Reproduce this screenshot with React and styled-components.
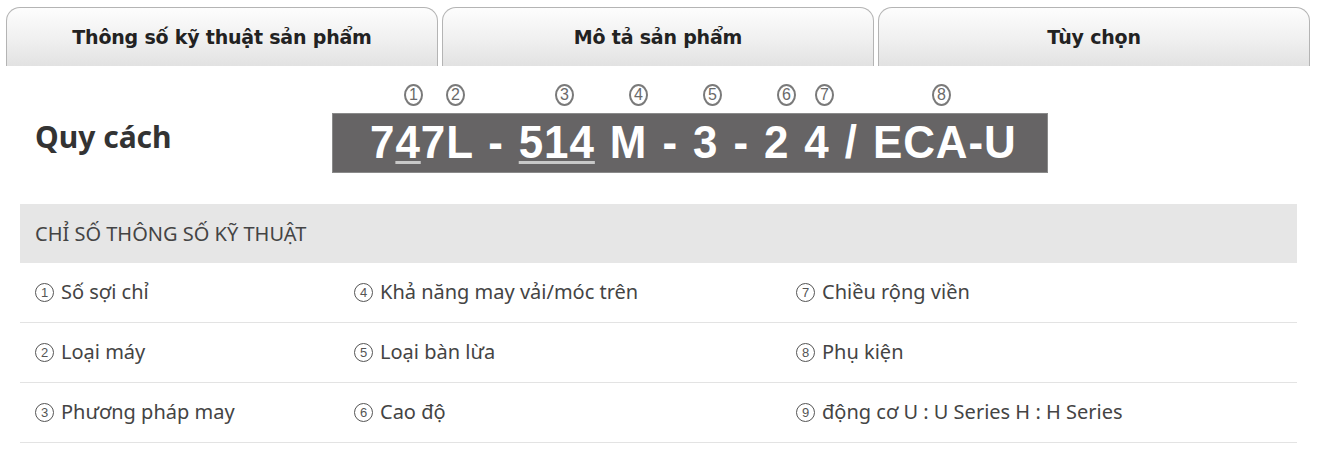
import React from 'react';
import styled, { createGlobalStyle } from 'styled-components';

const GlobalStyle = createGlobalStyle`
  body {
    margin: 0;
    background: #fff;
    font-family: 'Noto Sans', 'Open Sans', sans-serif;
    color: #333;
  }
`;

const Page = styled.div`
  width: 1320px;
  height: 475px;
  overflow: hidden;
`;

const TabBar = styled.div`
  display: grid;
  grid-template-columns: repeat(3, 432px);
  gap: 4px;
  padding: 7px 0 0 6px;
`;

const Tab = styled.div`
  height: 59px;
  box-sizing: border-box;
  border: 1px solid #b4b4b4;
  border-bottom: none;
  border-radius: 14px 14px 0 0;
  background: linear-gradient(to bottom, #fdfdfd 0%, #f1f1f1 50%, #e2e2e2 100%);
  display: flex;
  align-items: center;
  justify-content: center;
  padding-bottom: 1px;
  font-family: 'DejaVu Sans', sans-serif;
  font-weight: bold;
  font-size: 19px;
  letter-spacing: -0.2px;
  color: #222;
`;

const SpecRow = styled.div`
  display: flex;
  align-items: center;
  padding: 14px 0 0 35px;
  height: 107px;
  box-sizing: border-box;
`;

const SpecTitle = styled.h2`
  margin: 0;
  width: 297px;
  font-size: 30px;
  font-weight: bold;
  color: #333;
  padding-top: 19px;
`;

const CodeFigure = styled.div`
  position: relative;
  width: 716px;
  padding-top: 33px;
`;

const Marker = styled.span`
  position: absolute;
  top: 4px;
  left: ${p => p.$x}px;
  width: 19px;
  height: 22px;
  box-sizing: border-box;
  border: 2px solid #7a7a7a;
  border-radius: 50%;
  display: flex;
  align-items: center;
  justify-content: center;
  font-family: 'Liberation Sans', Arial, sans-serif;
  font-size: 16px;
  color: #6a6a6a;
`;

const CodeBox = styled.div`
  height: 60px;
  background: #666465;
  border: 1px solid #8a8a8a;
  box-sizing: border-box;
  display: flex;
  align-items: center;
  padding: 0 0 4px 37px;
  overflow: hidden;
`;

const CodeText = styled.span`
  display: inline-block;
  transform: scaleX(0.935);
  transform-origin: left center;
  color: #fff;
  font-family: 'Liberation Sans', Arial, sans-serif;
  font-weight: bold;
  font-size: 47px;
  line-height: 1;
  letter-spacing: 1px;
  word-spacing: 2px;
  white-space: pre;
`;

const Under = styled.span`
  text-decoration: underline;
  text-decoration-color: #c8c8c8;
  text-decoration-thickness: 3px;
  text-underline-offset: 3px;
`;

const Table = styled.div`
  margin: 31px 23px 0 20px;
`;

const TableHead = styled.div`
  height: 59px;
  background: #e6e6e6;
  display: flex;
  align-items: center;
  padding-left: 15px;
  font-size: 20px;
  color: #444;
`;

const Row = styled.div`
  display: grid;
  grid-template-columns: 319px 442px 1fr;
  height: 60px;
  box-sizing: border-box;
  border-bottom: 1px solid #e3e3e3;
  align-items: center;
  padding-bottom: 2px;
`;

const Cell = styled.div`
  padding-left: 15px;
  font-size: 20px;
  color: #444;
  display: flex;
  align-items: center;
  gap: 7px;
`;

const Num = styled.span`
  width: 19px;
  height: 19px;
  box-sizing: border-box;
  border: 1px solid #555;
  border-radius: 50%;
  display: inline-flex;
  align-items: center;
  justify-content: center;
  font-family: 'Liberation Sans', Arial, sans-serif;
  font-size: 13px;
  color: #555;
  margin-top: 2px;
`;

const markers = [
  ['1', 72], ['2', 114], ['3', 223], ['4', 297], ['5', 371],
  ['6', 445], ['7', 483], ['8', 600],
];

const rows = [
  [['1', 'Số sợi chỉ'], ['4', 'Khả năng may vải/móc trên'], ['7', 'Chiều rộng viền']],
  [['2', 'Loại máy'], ['5', 'Loại bàn lừa'], ['8', 'Phụ kiện']],
  [['3', 'Phương pháp may'], ['6', 'Cao độ'], ['9', 'động cơ U : U Series H : H Series']],
];

export default function App() {
  return (
    <Page>
      <GlobalStyle />
      <TabBar>
        <Tab>Thông số kỹ thuật sản phẩm</Tab>
        <Tab>Mô tả sản phẩm</Tab>
        <Tab>Tùy chọn</Tab>
      </TabBar>

      <SpecRow>
        <SpecTitle>Quy cách</SpecTitle>
        <CodeFigure>
          {markers.map(([m, x]) => (
            <Marker key={m} $x={x}>{m}</Marker>
          ))}
          <CodeBox>
            <CodeText>
              7<Under>4</Under>7L - <Under>514</Under> M - 3 - 2 4 / ECA-U
            </CodeText>
          </CodeBox>
        </CodeFigure>
      </SpecRow>

      <Table>
        <TableHead>CHỈ SỐ THÔNG SỐ KỸ THUẬT</TableHead>
        {rows.map((r, i) => (
          <Row key={i}>
            {r.map(([n, t]) => (
              <Cell key={n}>
                <Num>{n}</Num>
                {t}
              </Cell>
            ))}
          </Row>
        ))}
      </Table>
    </Page>
  );
}
